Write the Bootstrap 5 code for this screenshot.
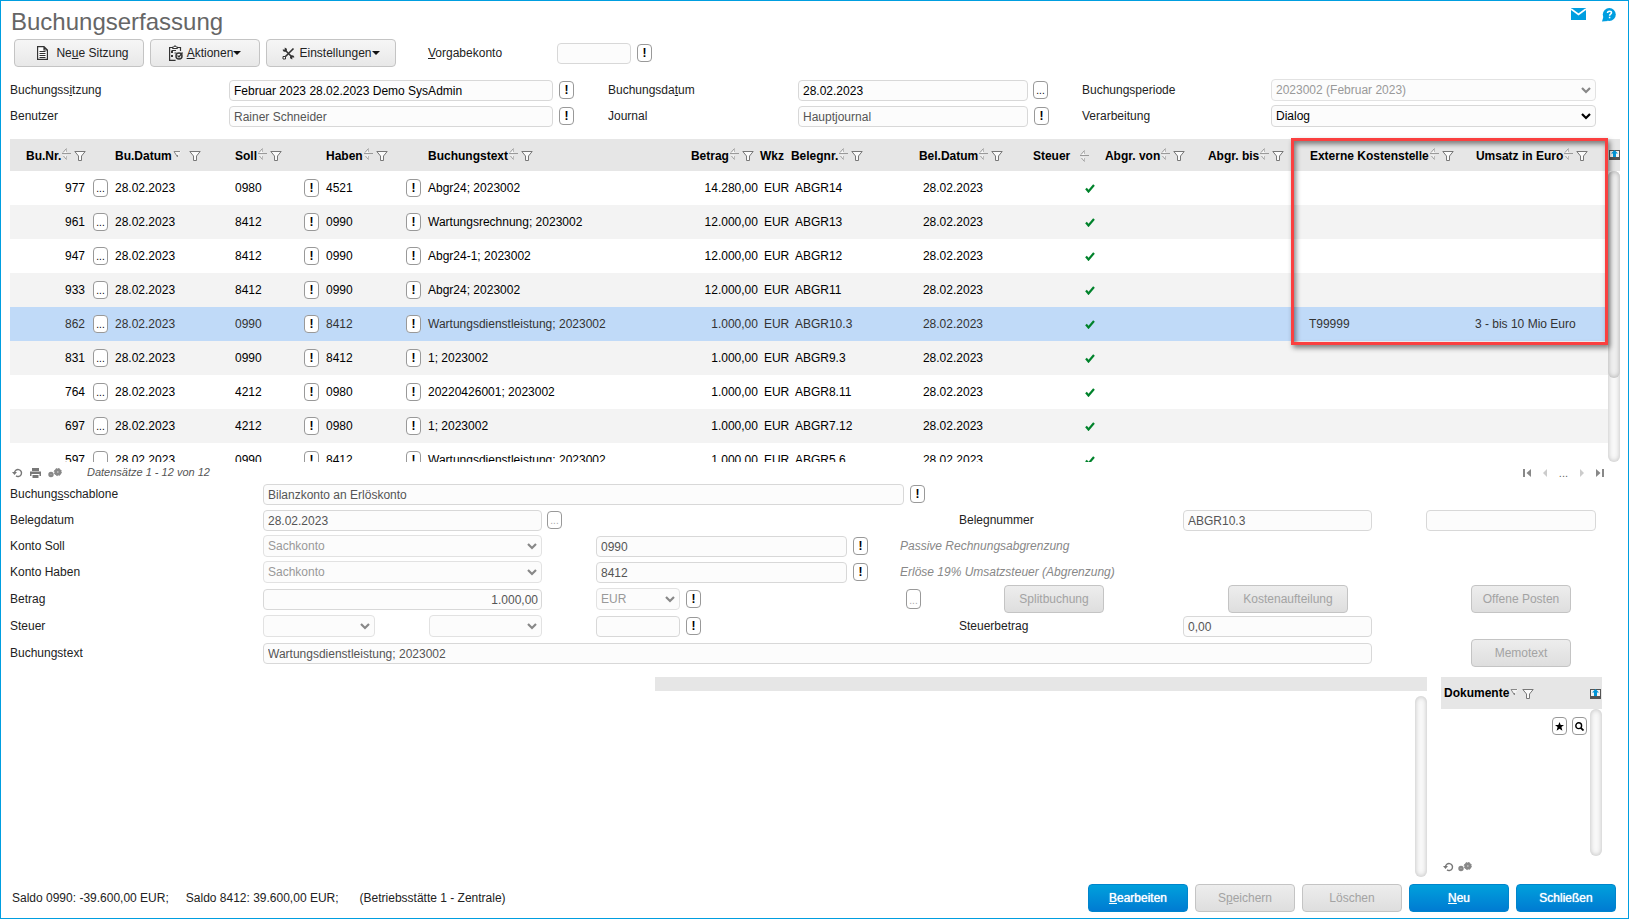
<!DOCTYPE html>
<html lang="de">
<head>
<meta charset="utf-8">
<meta name="viewport" content="width=device-width, initial-scale=1">
<title>Buchungserfassung</title>
<link href="https://cdn.jsdelivr.net/npm/bootstrap@5.3.0/dist/css/bootstrap.min.css" rel="stylesheet">
<style>
  body { font-family: "Liberation Sans", Arial, sans-serif; font-size: 12px; line-height: 22px; color: #222; }
  .app { border: 1px solid #009ee0; padding: 7px 0 6px; }
  h1 { font-size: 24px; line-height: 28px; color: #666; }
  svg { display: block; flex: none; }
  .edge { padding-left: 10px; }
  .tools { padding: 3px 0 0 13px; gap: 6px; }
  .tools label { width: 123px; margin-left: 26px; }
  .tools .form-control { width: 74px; }

  .btn { --bs-btn-font-size: 12px; height: 28px; padding: 0 8px; line-height: 26px; border-radius: 4px; flex: none; }
  .btn-grey { color: #222; border: 1px solid #c4c4c4; background: linear-gradient(#f6f6f6, #e8e8e8); }
  .btn-grey:disabled { color: #a3a3a3; border-color: #c4c4c4; background: linear-gradient(#ededed, #dedede); opacity: 1; }
  .btn-blue { color: #fff; border: 1px solid #0085cc; background: linear-gradient(#00a0dc, #007bd2); text-shadow: 0 0 1px #fff; }
  .w100 { width: 100px; } .w110 { width: 110px; } .w120 { width: 120px; } .w130 { width: 130px; }
  .caret-down { border: 4px solid transparent; border-top-color: #111; border-bottom: 0; }

  .mini { width: 15px; height: 18px; padding: 0; border: 1px solid #999; border-radius: 4px; background: #fff; color: #000;
          font-size: 12px; font-weight: bold; line-height: 15px; text-align: center; display: inline-flex; align-items: center; justify-content: center; flex: none; }
  .mini.dots { font-size: 10px; font-weight: normal; }
  .mini:disabled { color: #aaa; }
  .fields .mini { margin: 0 0 2px 6px; }
  .fields .mini.dots { margin-left: 5px; }
  .fields .mini.near { margin-left: 2px; height: 20px; margin-bottom: 1px; }

  .form-control, .form-select { font-size: 12px; line-height: 19px; color: #000; background-color: #fcfcfc; border: 1px solid #d8d8d8; border-radius: 4px; min-height: 0; }
  .form-control { height: 21px; padding: 1px 4px 0; }
  .form-control:read-only { color: #555; }
  .form-control.text-end { padding-right: 3px; }
  .form-select { height: 22px; padding: 1px 20px 0 4px;
    background-image: url("data:image/svg+xml,%3csvg xmlns='http://www.w3.org/2000/svg' viewBox='0 0 10 7'%3e%3cpath fill='none' stroke='%23000' stroke-width='2.2' d='M1 1l4 4 4-4'/%3e%3c/svg%3e");
    background-position: right 4px center; background-size: 10px 7px; }
  .form-select:disabled { color: #999; background-color: #fcfcfc; border-color: #e2e2e2;
    background-image: url("data:image/svg+xml,%3csvg xmlns='http://www.w3.org/2000/svg' viewBox='0 0 10 7'%3e%3cpath fill='none' stroke='%23888' stroke-width='2.2' d='M1 1l4 4 4-4'/%3e%3c/svg%3e"); }

  .fields { display: grid; align-items: end; padding: 0 32px 0 9px; }
  .fields > * { min-width: 0; }
  .head-fields { grid-template-rows: 26px 26px;
    grid-template-columns: minmax(0,219fr) minmax(0,324fr) minmax(0,55fr) minmax(0,190fr) minmax(0,230fr) minmax(0,54fr) minmax(0,189fr) minmax(0,325fr); }
  .entry-fields { grid-template-rows: 22px 26px 26px 26px 27px 27px 27px;
    grid-template-columns: minmax(0,253fr) minmax(0,112fr) minmax(0,54fr) minmax(0,113fr) minmax(0,54fr) minmax(0,84fr) minmax(0,167fr) minmax(0,57fr) minmax(0,55fr) minmax(0,224fr) minmax(0,189fr) minmax(0,54fr) minmax(0,170fr); }
  .r1 { grid-row: 1; } .r2 { grid-row: 2; } .r3 { grid-row: 3; } .r4 { grid-row: 4; } .r5 { grid-row: 5; } .r6 { grid-row: 6; } .r7 { grid-row: 7; }
  .low { margin: 0 0 -3px 45px; }
  .hint { color: #888; font-style: italic; margin-left: 32px; white-space: nowrap; }

  .grid-box { margin: 12px 8px 0 9px; }
  .grid-view { height: 323px; overflow: hidden; }
  .bookings { table-layout: fixed; border-collapse: collapse; width: 100%; color: #000; line-height: 18px; }
  .bookings th, .docs-head { background: #e6e6e6; font-weight: bold; color: #000; }
  .bookings th { height: 32px; padding: 2px 0 0 4px; white-space: nowrap; }
  .bookings th.tight { padding-left: 0; }
  .bookings th > div, .docs-head > div { display: flex; align-items: center; }
  .bookings td { height: 34px; padding: 0 3px 0 4px; white-space: nowrap; }
  .bookings td.text-end { padding-right: 2px; }
  .bookings td:nth-child(n+13) { padding-left: 3px; }
  .bookings tbody tr:nth-child(even) { background: #f3f3f3; }
  .bookings tbody tr.picked { background: #c0daf8; color: #333; }
  .bookings tbody svg { margin-left: auto; margin-right: 3px; }
  .ic-sort { margin: 0 3px 4px 1px; }
  .corner { height: 32px; background: #e6e6e6; padding: 11px 0 0 1px; }
  .side { width: 12px; flex: none; }
  .track { border-radius: 6px; background: #f8f8f8; box-shadow: inset 0 0 4px 1px #ccc; flex: 1 1 0; }
  .thumb { height: 207px; border-radius: 6px; background: #efefef; box-shadow: inset 0 0 4px 1px #bbb; }
  .frame-mark { position: absolute; top: -1px; right: 12px; width: 317px; height: 207px; border: 3px solid #fa4040;
    box-shadow: 2px 3px 5px #0007, inset 2px 3px 5px #0007; pointer-events: none; }

  .grid-foot { height: 21px; padding: 0 24px 0 11px; line-height: 21px; font-size: 11px; color: #555; }
  .grid-foot .records { margin-left: 25px; }
  .tool-gap { gap: 7px; } .pager { gap: 12px; }
  .plain { border: 0; padding: 0; background: none; color: #666; line-height: 12px; }
  .lower { padding: 13px 26px 0 9px; }
  .lower-left { flex: 645 1 0; } .lower-mid { flex: 772 1 0; } .lower-docs { flex: 161 1 0; margin-left: 14px; }
  .bar { height: 14px; background: #e6e6e6; margin-bottom: 5px; }
  .lower-mid .track { align-self: flex-end; }
  .docs-head { height: 32px; padding: 1px 1px 0 3px; line-height: 31px; }
  .docs-foot { height: 21px; padding-left: 2px; }
  .docs-tools { gap: 5px; padding-right: 3px; }
  .foot { padding: 7px 12px 0 11px; gap: 7px; }
  .saldo { gap: 17px; white-space: pre; }
</style>
</head>
<body>
<svg width="0" height="0" class="position-absolute" aria-hidden="true">
  <symbol id="sort" viewBox="0 0 9 12"><path d="M4.5 0v5H1zM4.5 12V7.500H1z" fill="#fff" opacity=".7"/><path d="M1 4.500L4.500.5M0 5.500h9M1.500 8l3 3.500" fill="none" stroke="#999"/><path d="M4.500.5V4M4.500 11.500V8" fill="none" stroke="#bbb"/></symbol>
  <symbol id="sorted" viewBox="0 0 9 12"><path d="M1 3l3.500 6L8 3z" fill="#f4f4f4"/><path d="M7 3.500H1l3.500 5.500V7" fill="none" stroke="#888"/></symbol>
  <symbol id="filter" viewBox="0 0 12 10"><path d="M.8.5h10.400L7.500 5v4.500h-3V5z" fill="#fafafa" stroke="#777"/></symbol>
  <symbol id="check" viewBox="0 0 10 9"><path d="M1 4.500l2.500 3L9 1" fill="none" stroke="#00822b" stroke-width="2.200"/></symbol>
  <symbol id="dock" viewBox="0 0 11 10"><path d="M0 0h11v10H0z" fill="#555"/><path d="M1 1h9v6H1z" fill="#f4f4f4"/><path d="M5.500 0L9 3.500H7V7H4V3.500H2z" fill="#0095d8"/></symbol>
  <symbol id="reload" viewBox="0 0 11 10"><path d="M2.500 5a3.500 3.500 0 1 1 1.500 2.900" fill="none" stroke="#777" stroke-width="1.400"/><path d="M0 4h5L2.500 7z" fill="#777"/></symbol>
  <symbol id="gears" viewBox="0 0 14 10"><circle cx="3" cy="6.500" r="1.600" fill="#bbb" stroke="#888" stroke-width="2.200"/><circle cx="9.800" cy="4" r="2.200" fill="#bbb" stroke="#888" stroke-width="2.600"/><circle cx="9.800" cy="4" r="3.600" fill="none" stroke="#888" stroke-dasharray="1.500 1.330"/></symbol>
</svg>

<div class="app d-flex flex-column min-vh-100">
  <header class="d-flex justify-content-between edge">
    <h1 class="m-0">Buchungserfassung</h1>
    <div class="d-flex gap-3 pe-2 me-1">
      <a href="#" aria-label="Nachrichten"><svg width="15" height="12" viewBox="0 0 15 12"><path d="M0 0h15v12H0z" fill="#009ee0"/><path d="M0 1l7.500 5.500L15 1" fill="none" stroke="#fff" stroke-width="1.800"/></svg></a>
      <a href="#" aria-label="Hilfe"><svg width="14" height="14" viewBox="0 0 14 14"><circle cx="7.300" cy="6.500" r="6.500" fill="#009ee0"/><path d="M0 13.500l1.500-5 4.500 4.500z" fill="#009ee0"/><path d="M5.500 5c0-2.500 4-2.300 4-.2 0 1.400-1.900 1.400-1.900 2.900M7.600 8.800v1.400" fill="none" stroke="#fff" stroke-width="1.500"/></svg></a>
    </div>
  </header>

  <div class="tools d-flex align-items-center">
    <button type="button" class="btn btn-grey w130 ps-3 pe-2 d-flex align-items-center justify-content-center"><svg width="11" height="14" viewBox="0 0 11 14" class="me-2"><path d="M.6.6h6.400l3.400 3.400v9.400H.6zM7 .6V4h3.400" fill="#fff" stroke="#333" stroke-width="1.200"/><path d="M2.500 5.500h6M2.500 7.500h6M2.500 9.500h6M2.500 11.500h6" stroke="#333"/></svg><span>Ne<u>u</u>e Sitzung</span></button>
    <button type="button" class="btn btn-grey w110 d-flex align-items-center justify-content-center"><svg width="14" height="16" viewBox="0 0 14 16" class="me-1"><path d="M11.500 6V2.500H.6v12.900h6" fill="none" stroke="#333" stroke-width="1.200"/><path d="M3.500 3.500V2H5l1-1.500 1 1.500h1.500v1.500z" fill="#fff" stroke="#333"/><path d="M2 6l2 2m0-2L2 8m0 2l2 2m0-2l-2 2M2.500 5.500H7M5.500 8h2" stroke="#333"/><circle cx="10" cy="11" r="3" fill="#fff" stroke="#333" stroke-width="1.500"/><path d="M8.500 10.500l1.500 1.500 3.500-4.500" fill="none" stroke="#333" stroke-width="1.300"/></svg><span><u>A</u>ktionen</span><i class="caret-down"></i></button>
    <button type="button" class="btn btn-grey w130 d-flex align-items-center justify-content-center"><svg width="13" height="13" viewBox="0 0 13 13" class="me-1"><path d="M3.500 3.500l6 6M11.500 1.500l-9 9" stroke="#333" stroke-width="1.600"/><path d="M.7 2.500c0 2.500 3 3 4 1.200S4 .8 2.500.7l.5 1.800zM12.300 10.500c0-2.500-3-3-4-1.200s.7 3 2.200 3L10 10.500z" fill="#333"/><path d="M1 9.500h2.500V12H1z" fill="#fff" stroke="#333"/></svg><span>Einstellungen</span><i class="caret-down"></i></button>
    <label for="vorgabe"><u>V</u>orgabekonto</label>
    <input id="vorgabe" class="form-control">
    <button type="button" class="mini" aria-label="Vorgabekonto suchen">!</button>
  </div>

  <form class="fields head-fields mt-2">
    <label for="sitzung">Buchungss<u>i</u>tzung</label>
    <input id="sitzung" class="form-control" value="Februar 2023 28.02.2023 Demo SysAdmin">
    <div class="d-flex align-items-end"><button type="button" class="mini">!</button></div>
    <label for="bdatum">Buchungsda<u>t</u>um</label>
    <input id="bdatum" class="form-control" value="28.02.2023">
    <div class="d-flex align-items-end"><button type="button" class="mini dots align-items-end">...</button></div>
    <label for="periode">Buchungsperiode</label>
    <select id="periode" class="form-select" disabled><option>2023002 (Februar 2023)</option></select>
    <label for="benutzer">Benutzer</label>
    <input id="benutzer" class="form-control" value="Rainer Schneider" readonly>
    <div class="d-flex align-items-end"><button type="button" class="mini">!</button></div>
    <label for="journal">Journal</label>
    <input id="journal" class="form-control" value="Hauptjournal" readonly>
    <div class="d-flex align-items-end"><button type="button" class="mini">!</button></div>
    <label for="verarb">Verarbeitung</label>
    <select id="verarb" class="form-select"><option>Dialog</option></select>
  </form>

  <div class="grid-box position-relative d-flex">
    <div class="grid-view flex-grow-1">
      <table class="bookings">
        <colgroup><col style="width:101px"><col style="width:120px"><col style="width:91px"><col style="width:102px"><col><col style="width:73px"><col style="width:31px"><col style="width:128px"><col style="width:114px"><col style="width:68px"><col style="width:103px"><col style="width:102px"><col style="width:166px"><col style="width:136px"></colgroup>
        <thead><tr>
          <th><div class="ps-2 ms-1">Bu.Nr.<svg class="ic-sort" width="9" height="12"><use href="#sort"/></svg><svg width="12" height="10"><use href="#filter"/></svg></div></th>
          <th><div>Bu.Datum<svg class="ic-sort" width="9" height="12"><use href="#sorted"/></svg><svg class="ms-1" width="12" height="10"><use href="#filter"/></svg></div></th>
          <th><div>Soll<svg class="ic-sort" width="9" height="12"><use href="#sort"/></svg><svg width="12" height="10"><use href="#filter"/></svg></div></th>
          <th><div>Haben<svg class="ic-sort" width="9" height="12"><use href="#sort"/></svg><svg width="12" height="10"><use href="#filter"/></svg></div></th>
          <th><div>Buchungstext<svg class="ic-sort" width="9" height="12"><use href="#sort"/></svg><svg width="12" height="10"><use href="#filter"/></svg></div></th>
          <th><div>Betrag<svg class="ic-sort" width="9" height="12"><use href="#sort"/></svg><svg width="12" height="10"><use href="#filter"/></svg></div></th>
          <th class="tight">Wkz</th>
          <th class="tight"><div>Belegnr.<svg class="ic-sort" width="9" height="12"><use href="#sort"/></svg><svg width="12" height="10"><use href="#filter"/></svg></div></th>
          <th class="tight"><div>Bel.Datum<svg class="ic-sort" width="9" height="12"><use href="#sort"/></svg><svg width="12" height="10"><use href="#filter"/></svg></div></th>
          <th class="tight"><div class="justify-content-between pe-2 me-1">Steuer<svg width="9" height="12"><use href="#sort"/></svg></div></th>
          <th><div>Abgr. von<svg class="ic-sort" width="9" height="12"><use href="#sort"/></svg><svg width="12" height="10"><use href="#filter"/></svg></div></th>
          <th><div>Abgr. bis<svg class="ic-sort" width="9" height="12"><use href="#sort"/></svg><svg width="12" height="10"><use href="#filter"/></svg></div></th>
          <th><div>Externe Kostenstelle<svg class="ic-sort" width="9" height="12"><use href="#sort"/></svg><svg width="12" height="10"><use href="#filter"/></svg></div></th>
          <th><div>Umsatz in Euro<svg class="ic-sort" width="9" height="12"><use href="#sort"/></svg><svg width="12" height="10"><use href="#filter"/></svg></div></th>
        </tr></thead>
        <tbody>
          <tr><td><div class="d-flex align-items-center justify-content-end">977<button type="button" class="mini dots ms-2">...</button></div></td><td>28.02.2023</td><td><div class="d-flex align-items-center justify-content-between">0980<button type="button" class="mini">!</button></div></td><td><div class="d-flex align-items-center justify-content-between">4521<button type="button" class="mini">!</button></div></td><td>Abgr24; 2023002</td><td class="text-end">14.280,00</td><td>EUR</td><td>ABGR14</td><td>28.02.2023</td><td><svg width="10" height="9"><use href="#check"/></svg></td><td></td><td></td><td></td><td></td></tr>
          <tr><td><div class="d-flex align-items-center justify-content-end">961<button type="button" class="mini dots ms-2">...</button></div></td><td>28.02.2023</td><td><div class="d-flex align-items-center justify-content-between">8412<button type="button" class="mini">!</button></div></td><td><div class="d-flex align-items-center justify-content-between">0990<button type="button" class="mini">!</button></div></td><td>Wartungsrechnung; 2023002</td><td class="text-end">12.000,00</td><td>EUR</td><td>ABGR13</td><td>28.02.2023</td><td><svg width="10" height="9"><use href="#check"/></svg></td><td></td><td></td><td></td><td></td></tr>
          <tr><td><div class="d-flex align-items-center justify-content-end">947<button type="button" class="mini dots ms-2">...</button></div></td><td>28.02.2023</td><td><div class="d-flex align-items-center justify-content-between">8412<button type="button" class="mini">!</button></div></td><td><div class="d-flex align-items-center justify-content-between">0990<button type="button" class="mini">!</button></div></td><td>Abgr24-1; 2023002</td><td class="text-end">12.000,00</td><td>EUR</td><td>ABGR12</td><td>28.02.2023</td><td><svg width="10" height="9"><use href="#check"/></svg></td><td></td><td></td><td></td><td></td></tr>
          <tr><td><div class="d-flex align-items-center justify-content-end">933<button type="button" class="mini dots ms-2">...</button></div></td><td>28.02.2023</td><td><div class="d-flex align-items-center justify-content-between">8412<button type="button" class="mini">!</button></div></td><td><div class="d-flex align-items-center justify-content-between">0990<button type="button" class="mini">!</button></div></td><td>Abgr24; 2023002</td><td class="text-end">12.000,00</td><td>EUR</td><td>ABGR11</td><td>28.02.2023</td><td><svg width="10" height="9"><use href="#check"/></svg></td><td></td><td></td><td></td><td></td></tr>
          <tr class="picked"><td><div class="d-flex align-items-center justify-content-end">862<button type="button" class="mini dots ms-2">...</button></div></td><td>28.02.2023</td><td><div class="d-flex align-items-center justify-content-between">0990<button type="button" class="mini">!</button></div></td><td><div class="d-flex align-items-center justify-content-between">8412<button type="button" class="mini">!</button></div></td><td>Wartungsdienstleistung; 2023002</td><td class="text-end">1.000,00</td><td>EUR</td><td>ABGR10.3</td><td>28.02.2023</td><td><svg width="10" height="9"><use href="#check"/></svg></td><td></td><td></td><td>T99999</td><td>3 - bis 10 Mio Euro</td></tr>
          <tr><td><div class="d-flex align-items-center justify-content-end">831<button type="button" class="mini dots ms-2">...</button></div></td><td>28.02.2023</td><td><div class="d-flex align-items-center justify-content-between">0990<button type="button" class="mini">!</button></div></td><td><div class="d-flex align-items-center justify-content-between">8412<button type="button" class="mini">!</button></div></td><td>1; 2023002</td><td class="text-end">1.000,00</td><td>EUR</td><td>ABGR9.3</td><td>28.02.2023</td><td><svg width="10" height="9"><use href="#check"/></svg></td><td></td><td></td><td></td><td></td></tr>
          <tr><td><div class="d-flex align-items-center justify-content-end">764<button type="button" class="mini dots ms-2">...</button></div></td><td>28.02.2023</td><td><div class="d-flex align-items-center justify-content-between">4212<button type="button" class="mini">!</button></div></td><td><div class="d-flex align-items-center justify-content-between">0980<button type="button" class="mini">!</button></div></td><td>20220426001; 2023002</td><td class="text-end">1.000,00</td><td>EUR</td><td>ABGR8.11</td><td>28.02.2023</td><td><svg width="10" height="9"><use href="#check"/></svg></td><td></td><td></td><td></td><td></td></tr>
          <tr><td><div class="d-flex align-items-center justify-content-end">697<button type="button" class="mini dots ms-2">...</button></div></td><td>28.02.2023</td><td><div class="d-flex align-items-center justify-content-between">4212<button type="button" class="mini">!</button></div></td><td><div class="d-flex align-items-center justify-content-between">0980<button type="button" class="mini">!</button></div></td><td>1; 2023002</td><td class="text-end">1.000,00</td><td>EUR</td><td>ABGR7.12</td><td>28.02.2023</td><td><svg width="10" height="9"><use href="#check"/></svg></td><td></td><td></td><td></td><td></td></tr>
          <tr><td><div class="d-flex align-items-center justify-content-end">597<button type="button" class="mini dots ms-2">...</button></div></td><td>28.02.2023</td><td><div class="d-flex align-items-center justify-content-between">0990<button type="button" class="mini">!</button></div></td><td><div class="d-flex align-items-center justify-content-between">8412<button type="button" class="mini">!</button></div></td><td>Wartungsdienstleistung; 2023002</td><td class="text-end">1.000,00</td><td>EUR</td><td>ABGR5.6</td><td>28.02.2023</td><td><svg width="10" height="9"><use href="#check"/></svg></td><td></td><td></td><td></td><td></td></tr>
        </tbody>
      </table>
    </div>
    <div class="side d-flex flex-column">
      <div class="corner"><svg width="11" height="10"><use href="#dock"/></svg></div>
      <div class="track"><div class="thumb"></div></div>
    </div>
    <div class="frame-mark"></div>
  </div>

  <div class="grid-foot d-flex align-items-center">
    <div class="tool-gap d-flex align-items-center">
      <button type="button" class="plain" aria-label="Aktualisieren"><svg width="11" height="10"><use href="#reload"/></svg></button>
      <button type="button" class="plain" aria-label="Drucken"><svg width="11" height="10" viewBox="0 0 11 10"><path d="M2 0h7v3H2zM0 3.500h11V8H9.500V6h-8v2H0zM2.500 7h6v3h-6z" fill="#777"/></svg></button>
      <button type="button" class="plain" aria-label="Optionen"><svg width="14" height="10"><use href="#gears"/></svg></button>
    </div>
    <i class="records">Datensätze 1 - 12 von 12</i>
    <div class="pager d-flex align-items-center ms-auto">
      <button type="button" class="plain" aria-label="Anfang"><svg width="8" height="8" viewBox="0 0 8 8"><path d="M0 0h2v8H0zM8 0v8L3.500 4z" fill="#888"/></svg></button>
      <button type="button" class="plain" aria-label="Zurück"><svg width="4" height="8" viewBox="0 0 4 8"><path d="M4 0v8L0 4z" fill="#ccc"/></svg></button>
      <button type="button" class="plain">...</button>
      <button type="button" class="plain" aria-label="Weiter"><svg width="4" height="8" viewBox="0 0 4 8"><path d="M0 0v8l4-4z" fill="#ccc"/></svg></button>
      <button type="button" class="plain" aria-label="Ende"><svg width="8" height="8" viewBox="0 0 8 8"><path d="M6 0h2v8H6zM0 0v8l4.500-4z" fill="#888"/></svg></button>
    </div>
  </div>

  <form class="fields entry-fields">
    <label class="r1" for="schablone">Buchung<u>s</u>schablone</label>
    <input id="schablone" class="form-control r1" style="grid-column:2/9" value="Bilanzkonto an Erlöskonto" readonly>
    <div class="r1 d-flex" style="grid-column:9"><button type="button" class="mini">!</button></div>

    <label class="r2" for="belegdatum">Belegdatum</label>
    <input id="belegdatum" class="form-control r2" style="grid-column:2/5" value="28.02.2023" readonly>
    <div class="r2 d-flex" style="grid-column:5"><button type="button" class="mini dots align-items-end" disabled>...</button></div>
    <label class="r2" for="belegnr" style="grid-column:10">Belegnummer</label>
    <input id="belegnr" class="form-control r2" style="grid-column:11" value="ABGR10.3" readonly>
    <input class="form-control r2" style="grid-column:13" aria-label="Zusatz" readonly>

    <label class="r3" for="soll">Konto Soll</label>
    <select id="soll" class="form-select r3" style="grid-column:2/5" disabled><option>Sachkonto</option></select>
    <input class="form-control r3" style="grid-column:6/8" value="0990" aria-label="Konto Soll Nummer" readonly>
    <div class="r3 d-flex align-items-end" style="grid-column:8/11"><button type="button" class="mini">!</button><span class="hint">Passive Rechnungsabgrenzung</span></div>

    <label class="r4" for="haben">Konto Haben</label>
    <select id="haben" class="form-select r4" style="grid-column:2/5" disabled><option>Sachkonto</option></select>
    <input class="form-control r4" style="grid-column:6/8" value="8412" aria-label="Konto Haben Nummer" readonly>
    <div class="r4 d-flex align-items-end" style="grid-column:8/11"><button type="button" class="mini">!</button><span class="hint">Erlöse 19% Umsatzsteuer (Abgrenzung)</span></div>

    <label class="r5" for="betrag">Betrag</label>
    <input id="betrag" class="form-control text-end r5" style="grid-column:2/5" value="1.000,00" readonly>
    <select class="form-select r5" style="grid-column:6" aria-label="Währung" disabled><option>EUR</option></select>
    <div class="r5 d-flex" style="grid-column:7"><button type="button" class="mini">!</button></div>
    <div class="r5 d-flex" style="grid-column:9"><button type="button" class="mini dots near align-items-end" disabled>...</button></div>
    <button type="button" class="btn btn-grey w100 low r5" style="grid-column:10" disabled>Splitbuchung</button>
    <button type="button" class="btn btn-grey w120 low r5" style="grid-column:11" disabled>Kostenaufteilung</button>
    <button type="button" class="btn btn-grey w100 low r5" style="grid-column:13" disabled>Offene Posten</button>

    <label class="r6" for="steuer">Steuer</label>
    <select id="steuer" class="form-select r6" style="grid-column:2" disabled><option></option></select>
    <select class="form-select r6" style="grid-column:4" aria-label="Steuerart" disabled><option></option></select>
    <input class="form-control r6" style="grid-column:6" aria-label="Steuersatz" readonly>
    <div class="r6 d-flex" style="grid-column:7"><button type="button" class="mini">!</button></div>
    <label class="r6" for="steuerbetrag" style="grid-column:10">Steuerbetrag</label>
    <input id="steuerbetrag" class="form-control r6" style="grid-column:11" value="0,00" readonly>

    <label class="r7" for="btext">Buchungstext</label>
    <input id="btext" class="form-control r7" style="grid-column:2/12" value="Wartungsdienstleistung; 2023002" readonly>
    <button type="button" class="btn btn-grey w100 low r7" style="grid-column:13" disabled>Memotext</button>
  </form>

  <main class="lower d-flex flex-grow-1">
    <div class="lower-left"></div>
    <div class="lower-mid d-flex flex-column">
      <div class="bar"></div>
      <div class="side track"></div>
    </div>
    <section class="lower-docs d-flex flex-column">
      <div class="docs-head"><div>Dokumente<svg class="ic-sort" width="9" height="12"><use href="#sorted"/></svg><svg width="12" height="10"><use href="#filter"/></svg><svg class="ms-auto" width="11" height="10"><use href="#dock"/></svg></div></div>
      <div class="d-flex flex-grow-1 justify-content-end">
        <div class="docs-tools d-flex align-items-start pt-2">
          <button type="button" class="mini" aria-label="Favorit"><svg width="9" height="9" viewBox="0 0 9 9"><path d="M4.500 0l1.200 3H9L6.400 5l1 3.700-2.900-2-2.900 2 1-3.700L0 3h3.300z"/></svg></button>
          <button type="button" class="mini" aria-label="Suchen"><svg width="9" height="9" viewBox="0 0 9 9"><circle cx="3.700" cy="3.700" r="2.900" fill="none" stroke="#000" stroke-width="1.400"/><path d="M5.800 5.800l2.700 2.700" stroke="#000" stroke-width="1.800"/></svg></button>
        </div>
        <div class="side d-flex"><div class="track"></div></div>
      </div>
      <div class="docs-foot d-flex align-items-center">
        <button type="button" class="plain" aria-label="Aktualisieren"><svg width="11" height="10"><use href="#reload"/></svg></button>
        <button type="button" class="plain ms-1" aria-label="Optionen"><svg width="14" height="10"><use href="#gears"/></svg></button>
      </div>
    </section>
  </main>

  <footer class="foot d-flex align-items-center">
    <div class="saldo d-flex me-auto"><span>Saldo 0990: -39.600,00 EUR;</span><span>Saldo 8412: 39.600,00 EUR;</span><span class="ms-1">(Betriebsstätte 1 - Zentrale)</span></div>
    <button type="button" class="btn btn-blue w100"><u>B</u>earbeiten</button>
    <button type="button" class="btn btn-grey w100" disabled>S<u>p</u>eichern</button>
    <button type="button" class="btn btn-grey w100" disabled>Löschen</button>
    <button type="button" class="btn btn-blue w100"><u>N</u>eu</button>
    <button type="button" class="btn btn-blue w100">Schließen</button>
  </footer>
</div>
<script src="https://cdn.jsdelivr.net/npm/bootstrap@5.3.0/dist/js/bootstrap.bundle.min.js"></script>
</body>
</html>
